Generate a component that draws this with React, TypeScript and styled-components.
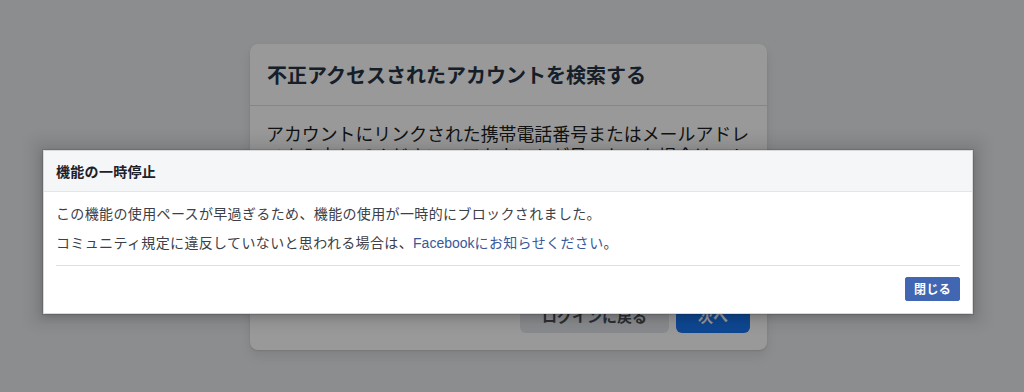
import React from "react";
import styled, { createGlobalStyle } from "styled-components";

const GlobalStyle = createGlobalStyle`
  html, body { margin: 0; padding: 0; }
  body {
    width: 1024px;
    height: 392px;
    overflow: hidden;
    background: #e9ebee;
    font-family: "Noto Sans CJK JP", "Liberation Sans", sans-serif;
  }
`;

const Page = styled.div`
  position: relative;
  width: 1024px;
  height: 392px;
  padding: 44px 0 0 250px;
  box-sizing: border-box;
`;

const Card = styled.section`
  width: 517px;
  background: #ffffff;
  border-radius: 8px;
  box-shadow: 0 1px 2px rgba(0, 0, 0, 0.1), 0 6px 12px rgba(0, 0, 0, 0.08);
  display: flex;
  flex-direction: column;
`;

const CardHeader = styled.header`
  height: 61px;
  padding: 0 17px;
  display: flex;
  align-items: center;
  border-bottom: 1px solid #dddfe2;
`;

const CardTitle = styled.h2`
  margin: 0;
  font-size: 20px;
  font-weight: 700;
  line-height: 28px;
  color: #263244;
`;

const CardBody = styled.div`
  padding: 16px 16px 24px;
`;

const CardText = styled.p`
  margin: 0;
  font-size: 17.9px;
  line-height: 22px;
  color: #1c1e21;
`;

const Input = styled.div`
  margin-top: 16px;
  height: 52px;
  border: 1px solid #dddfe2;
  border-radius: 6px;
  box-sizing: border-box;
`;

const CardFooter = styled.footer`
  display: flex;
  justify-content: flex-end;
  gap: 7px;
  padding: 16px 17px 17px 16px;
  border-top: 1px solid #dddfe2;
`;

const CardButton = styled.button<{ $primary?: boolean }>`
  height: 36px;
  padding: 0 22px;
  border: none;
  border-radius: 6px;
  font-family: "Noto Sans CJK JP", "Liberation Sans", sans-serif;
  font-size: 15px;
  font-weight: 700;
  background: ${(p) => (p.$primary ? "#1877f2" : "#e4e6eb")};
  color: ${(p) => (p.$primary ? "#ffffff" : "#4b4f56")};
`;

const Overlay = styled.div`
  position: absolute;
  inset: 0;
  background: rgba(0, 0, 0, 0.4);
`;

const Dialog = styled.div`
  position: absolute;
  top: 150px;
  left: 43px;
  width: 930px;
  box-sizing: border-box;
  background: #ffffff;
  border: 1px solid rgba(0, 0, 0, 0.15);
  box-shadow: 0 0 12px 11px rgba(0, 0, 0, 0.08), 0 2px 8px rgba(0, 0, 0, 0.2),
    0 0 0 1px rgba(0, 0, 0, 0.1);
  font-family: "Noto Sans CJK JP", "Liberation Sans", sans-serif;
`;

const DialogHeader = styled.div`
  height: 40px;
  padding: 0 12px;
  display: flex;
  align-items: center;
  background: #f5f6f7;
  border-bottom: 1px solid #e5e5e5;
`;

const DialogTitle = styled.h3`
  margin: 0;
  font-size: 14px;
  font-weight: 700;
  line-height: 19px;
  letter-spacing: 0.3px;
  color: #1d2129;
`;

const DialogBody = styled.div`
  padding: 11px 12px 12px;
`;

const DialogText = styled.p`
  margin: 0;
  font-size: 14px;
  line-height: 20px;
  letter-spacing: 0.36px;
  color: #3d4046;
  & + & {
    margin-top: 9px;
  }
`;

const Link = styled.a`
  color: #385898;
  text-decoration: none;
  font-family: "Liberation Sans", "Noto Sans CJK JP", sans-serif;
  letter-spacing: 0;
  & > span {
    font-family: "Noto Sans CJK JP", sans-serif;
    letter-spacing: 0.36px;
  }
`;

const DialogFooter = styled.div`
  margin: 0 12px;
  padding: 11px 0 12px;
  border-top: 1px solid #dddfe2;
  display: flex;
  justify-content: flex-end;
`;

const CloseButton = styled.button`
  height: 24px;
  padding: 0 8px;
  border: 1px solid #4267b2;
  border-radius: 2px;
  background: #4267b2;
  color: #ffffff;
  font-family: "Noto Sans CJK JP", "Liberation Sans", sans-serif;
  font-size: 12px;
  font-weight: 700;
  line-height: 22px;
  letter-spacing: 0.3px;
`;

export default function App() {
  return (
    <>
      <GlobalStyle />
      <Page>
        <Card>
          <CardHeader>
            <CardTitle>不正アクセスされたアカウントを検索する</CardTitle>
          </CardHeader>
          <CardBody>
            <CardText>
              アカウントにリンクされた携帯電話番号またはメールアドレスを入力してください。アカウントが見つかった場合は、トップに表示されます。
            </CardText>
            <Input />
          </CardBody>
          <CardFooter>
            <CardButton>ログインに戻る</CardButton>
            <CardButton $primary>次へ</CardButton>
          </CardFooter>
        </Card>
        <Overlay />
        <Dialog role="dialog">
          <DialogHeader>
            <DialogTitle>機能の一時停止</DialogTitle>
          </DialogHeader>
          <DialogBody>
            <DialogText>
              この機能の使用ペースが早過ぎるため、機能の使用が一時的にブロックされました。
            </DialogText>
            <DialogText>
              コミュニティ規定に違反していないと思われる場合は、
              <Link href="#">
                Facebook<span>にお知らせください</span>
              </Link>
              。
            </DialogText>
          </DialogBody>
          <DialogFooter>
            <CloseButton>閉じる</CloseButton>
          </DialogFooter>
        </Dialog>
      </Page>
    </>
  );
}
